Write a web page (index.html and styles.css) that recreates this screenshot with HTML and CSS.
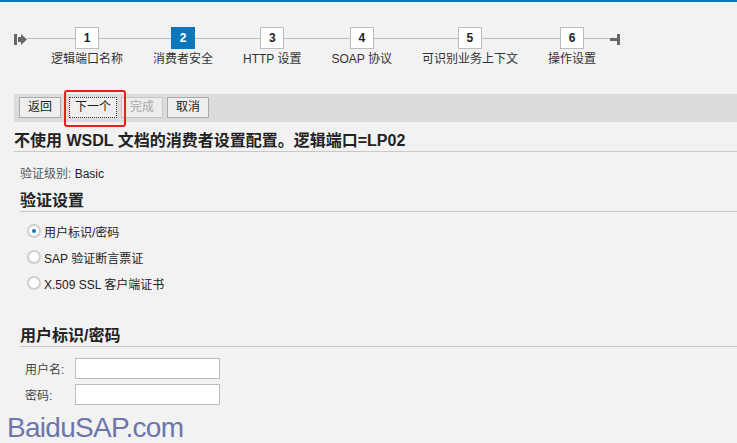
FILE: index.html
```html
<!DOCTYPE html>
<html lang="zh">
<head>
<meta charset="utf-8">
<title>消费者安全</title>
<link rel="stylesheet" href="styles.css">
</head>
<body>
<div class="topbar"></div>
<div class="roadmap">
  <svg class="rm-start" width="13" height="11" viewBox="0 0 13 11"><rect x="0" y="0" width="3" height="11" fill="#676767"/><rect x="4" y="3" width="4" height="5" fill="#676767"/><polygon points="7,0 13,5.5 7,11" fill="#676767"/></svg>
  <div class="steps">
    <div class="step"><div class="num">1</div><div class="lbl">逻辑端口名称</div></div>
    <div class="step"><div class="num active">2</div><div class="lbl">消费者安全</div></div>
    <div class="step"><div class="num">3</div><div class="lbl">HTTP 设置</div></div>
    <div class="step"><div class="num">4</div><div class="lbl">SOAP 协议</div></div>
    <div class="step"><div class="num">5</div><div class="lbl">可识别业务上下文</div></div>
    <div class="step"><div class="num">6</div><div class="lbl">操作设置</div></div>
  </div>
  <svg class="rm-end" width="10" height="11" viewBox="0 0 10 11"><rect x="0" y="4" width="7" height="3" fill="#676767"/><rect x="7" y="0" width="3" height="11" fill="#676767"/></svg>
</div>
<div class="toolbar">
  <button class="btn first">返回</button>
  <button class="btn focus">下一个</button>
  <button class="btn disabled">完成</button>
  <button class="btn">取消</button>
  <div class="mark"></div>
</div>
<h1 class="title">不使用 WSDL 文档的消费者设置配置。逻辑端口=LP02</h1>
<div class="info"><span class="info-l">验证级别:</span> <span class="info-v">Basic</span></div>
<h2 class="sec">验证设置</h2>
<div class="radios">
  <div class="radio-row"><span class="radio on"></span><span>用户标识/密码</span></div>
  <div class="radio-row"><span class="radio"></span><span>SAP 验证断言票证</span></div>
  <div class="radio-row"><span class="radio"></span><span>X.509 SSL 客户端证书</span></div>
</div>
<h2 class="sec sec2">用户标识/密码</h2>
<div class="form">
  <div class="frow"><label class="flbl">用户名:</label><input class="fin" type="text"></div>
  <div class="frow"><label class="flbl">密码:</label><input class="fin" type="password"></div>
</div>
<div class="watermark">BaiduSAP.com</div>
</body>
</html>
```

FILE: styles.css
```css
html, body {
  margin: 0;
  padding: 0;
}
body {
  background: #f2f2f2;
  font-family: "Liberation Sans", "Noto Sans CJK SC", sans-serif;
  font-size: 12px;
  color: #333;
  position: relative;
  height: 443px;
  overflow: hidden;
}
.topbar {
  height: 2px;
  background: #0a77bd;
}
.roadmap {
  display: flex;
  align-items: flex-start;
  padding: 25px 0 0 14px;
  position: relative;
}
.rm-start {
  margin-top: 7px;
  display: block;
}
.rm-end {
  margin-top: 7px;
  display: block;
}
.steps {
  display: flex;
  gap: 30px;
  padding: 0 14px 0 24px;
  position: relative;
}
.steps::before {
  content: "";
  position: absolute;
  left: 0;
  right: 0;
  top: 11px;
  height: 1px;
  background: #bcbcbc;
}
.step {
  display: flex;
  flex-direction: column;
  align-items: center;
  position: relative;
}
.num {
  width: 24px;
  height: 22px;
  box-sizing: border-box;
  border: 1px solid #bdbdbd;
  background: #fff;
  font-weight: bold;
  font-size: 12px;
  line-height: 20px;
  text-align: center;
  color: #222;
}
.num.active {
  background: #0a77bd;
  border-color: #0a77bd;
  color: #fff;
}
.lbl {
  margin-top: 2px;
  line-height: 16px;
  white-space: nowrap;
  color: #333;
}
.toolbar {
  margin: 27px 0 0 14px;
  height: 28px;
  box-sizing: border-box;
  background: #dcdcdc;
  padding: 3px 5px;
  display: flex;
  gap: 4px;
  position: relative;
}
.btn {
  height: 21px;
  box-sizing: border-box;
  padding: 0 8px;
  border: 1px solid #ababab;
  background: #efefef;
  font-family: "Liberation Sans", "Noto Sans CJK SC", sans-serif;
  font-size: 12px;
  line-height: 19px;
  color: #222;
  margin: 0;
  border-radius: 0;
}
.btn.first {
  margin-right: 4px;
}
.btn.focus {
  border: 1px dotted #333;
  padding: 0 5px;
}
.btn.disabled {
  color: #a8a8a8;
  border-color: #c4c4c4;
  background: #ececec;
}
.mark {
  position: absolute;
  left: 50px;
  top: -4px;
  width: 62px;
  height: 37px;
  box-sizing: border-box;
  border: 2px solid #e5211c;
  border-radius: 3px;
}
.title {
  margin: 8px 0 0 14px;
  font-size: 16px;
  font-weight: bold;
  line-height: 21px;
  color: #222;
  border-bottom: 1px solid #c8c8c8;
}
.info {
  margin: 14px 0 0 20px;
  line-height: 16px;
}
.info-l {
  color: #555;
}
.info-v {
  color: #222;
}
.sec {
  margin: 9px 0 0 20px;
  font-size: 16px;
  font-weight: bold;
  line-height: 20px;
  color: #222;
  border-bottom: 1px solid #c8c8c8;
}
.sec2 {
  margin-top: 30px;
}
.radios {
  margin: 6px 0 0 27px;
}
.radio-row {
  height: 26px;
  display: flex;
  align-items: center;
  gap: 3px;
  color: #222;
}
.radio {
  width: 14px;
  height: 14px;
  box-sizing: border-box;
  border-radius: 50%;
  border: 2px solid #cfcfcf;
  background: #fff;
  position: relative;
}
.radio.on::after {
  content: "";
  position: absolute;
  left: 3px;
  top: 3px;
  width: 4px;
  height: 4px;
  border-radius: 50%;
  background: #0a77bd;
}
.form {
  margin: 11px 0 0 25px;
  display: flex;
  flex-direction: column;
  gap: 5px;
}
.frow {
  display: flex;
  align-items: center;
}
.flbl {
  width: 50px;
  color: #444;
}
.fin {
  width: 145px;
  height: 21px;
  box-sizing: border-box;
  border: 1px solid #bcbcbc;
  background: #fff;
  margin: 0;
  padding: 0 3px;
}
.watermark {
  position: absolute;
  left: 7px;
  top: 413px;
  font-family: "Liberation Sans", sans-serif;
  font-size: 28px;
  line-height: 30px;
  color: #6b76ad;
  letter-spacing: -0.7px;
}
```
